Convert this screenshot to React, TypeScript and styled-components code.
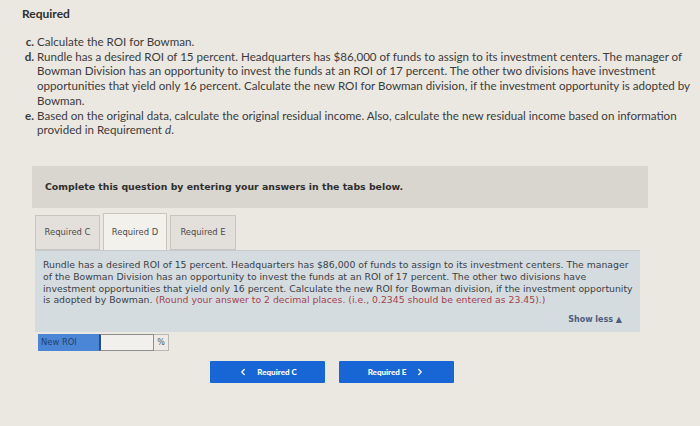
import styled, { createGlobalStyle } from "styled-components";
import { ChevronLeft, ChevronRight } from "lucide-react";

const Global = createGlobalStyle`
  html, body { margin: 0; padding: 0; background: #ebe8e2; }
  * { box-sizing: border-box; }
`

const Page = styled.div`
  width: 700px;
  height: 426px;
  overflow: hidden;
  padding: 6px 0 0 22px;
  background: #ebe8e2;
  font-family: Lato, "Open Sans", sans-serif;
  color: #3b3b3b;
`

const Title = styled.div`
  font-size: 12px;
  font-weight: 700;
  line-height: 16px;
  color: #2f2f2f;
`

const List = styled.div`
  margin-top: 13px;
  font-size: 11.6px;
  line-height: 14.7px;
`

const Item = styled.div`
  display: flex;
`

const Label = styled.span`
  width: 15px;
  flex-shrink: 0;
  font-weight: 700;
  text-align: right;
  padding-right: 3px;
`

const ItemText = styled.div`
  white-space: nowrap;
`

const Banner = styled.div`
  margin: 28px 0 0 10px;
  width: 616px;
  height: 42px;
  background: #d9d5cf;
  display: flex;
  align-items: center;
  padding-left: 13px;
  font-family: "DejaVu Sans", Verdana, sans-serif;
  font-size: 9.35px;
  font-weight: 700;
  color: #2e2e2e;
`

const Tabs = styled.div`
  margin: 5px 0 0 13px;
  display: flex;
  gap: 3px;
  align-items: flex-end;
`

const Tab = styled.div<{ $active?: boolean; $w: number }>`
  width: ${p => p.$w}px;
  height: ${p => (p.$active ? 37 : 35)}px;
  background: ${p => (p.$active ? "#f3f1ec" : "#e3e0db")};
  border: 1px solid #c9c6c0;
  border-bottom: ${p => (p.$active ? "none" : "1px solid #c9c6c0")};
  display: flex;
  align-items: center;
  justify-content: center;
  font-family: "DejaVu Sans", Verdana, sans-serif;
  font-size: 8.4px;
  color: #4a4a4a;
`

const Panel = styled.div`
  margin-left: 13px;
  width: 605px;
  height: 82px;
  background: #d5dce0;
  border-top: 1px solid #c4cace;
  padding: 8px 18px 0 8px;
  font-family: "DejaVu Sans", Verdana, sans-serif;
  font-size: 9.3px;
  line-height: 11.8px;
  color: #3a3e44;
  display: flex;
  flex-direction: column;
`

const PanelText = styled.div`
  white-space: nowrap;
`

const Hint = styled.span`
  color: #a3434d;
`

const ShowLess = styled.div`
  margin-top: 8px;
  align-self: flex-end;
  font-weight: 700;
  font-size: 8px;
  color: #4d5d7d;
`

const AnswerRow = styled.div`
  margin: 2px 0 0 16px;
  display: flex;
  height: 17px;
`

const AnswerLabel = styled.div`
  width: 61px;
  background: #4b86d6;
  color: #24406a;
  font-family: "DejaVu Sans", Verdana, sans-serif;
  font-size: 8.4px;
  display: flex;
  align-items: center;
  padding-left: 3px;
`

const AnswerInput = styled.div`
  width: 55px;
  background: #f1f0ed;
  border: 1px solid #8f8f8f;
  border-left: 2px solid #2a4a80;
`

const Unit = styled.div`
  width: 15px;
  border: 1px solid #b9b7b2;
  border-left: none;
  background: #eeebe6;
  font-family: "DejaVu Sans", Verdana, sans-serif;
  font-size: 8px;
  display: flex;
  align-items: center;
  justify-content: center;
  color: #555;
`

const Nav = styled.div`
  margin: 10px 0 0 188px;
  display: flex;
  gap: 14px;
`

const NavButton = styled.div`
  width: 115px;
  height: 22px;
  background: #1866d6;
  border-radius: 1px;
  display: flex;
  align-items: center;
  justify-content: center;
  gap: 9px;
  color: #fff;
  font-size: 8px;
  font-weight: 900;
`

export default function App() {
  return (
    <Page>
      <Global />
      <Title>Required</Title>
      <List>
        <Item>
          <Label>c.</Label>
          <ItemText>Calculate the ROI for Bowman.</ItemText>
        </Item>
        <Item>
          <Label>d.</Label>
          <ItemText>
            Rundle has a desired ROI of 15 percent. Headquarters has $86,000 of funds to assign to its investment centers. The manager of
            <br />
            Bowman Division has an opportunity to invest the funds at an ROI of 17 percent. The other two divisions have investment
            <br />
            opportunities that yield only 16 percent. Calculate the new ROI for Bowman division, if the investment opportunity is adopted by
            <br />
            Bowman.
          </ItemText>
        </Item>
        <Item>
          <Label>e.</Label>
          <ItemText>
            Based on the original data, calculate the original residual income. Also, calculate the new residual income based on information
            <br />
            provided in Requirement <i>d</i>.
          </ItemText>
        </Item>
      </List>

      <Banner>Complete this question by entering your answers in the tabs below.</Banner>

      <Tabs>
        <Tab $w={65}>Required C</Tab>
        <Tab $w={64} $active>Required D</Tab>
        <Tab $w={66}>Required E</Tab>
      </Tabs>
      <Panel>
        <PanelText>
          Rundle has a desired ROI of 15 percent. Headquarters has $86,000 of funds to assign to its investment centers. The manager
          <br />
          of the Bowman Division has an opportunity to invest the funds at an ROI of 17 percent. The other two divisions have
          <br />
          investment opportunities that yield only 16 percent. Calculate the new ROI for Bowman division, if the investment opportunity
          <br />
          is adopted by Bowman. <Hint>(Round your answer to 2 decimal places. (i.e., 0.2345 should be entered as 23.45).)</Hint>
        </PanelText>
        <ShowLess>Show less ▲</ShowLess>
      </Panel>

      <AnswerRow>
        <AnswerLabel>New ROI</AnswerLabel>
        <AnswerInput />
        <Unit>%</Unit>
      </AnswerRow>

      <Nav>
        <NavButton>
          <ChevronLeft size={10} strokeWidth={3} />
          <span>Required C</span>
        </NavButton>
        <NavButton>
          <span>Required E</span>
          <ChevronRight size={10} strokeWidth={3} />
        </NavButton>
      </Nav>
    </Page>
  );
}
